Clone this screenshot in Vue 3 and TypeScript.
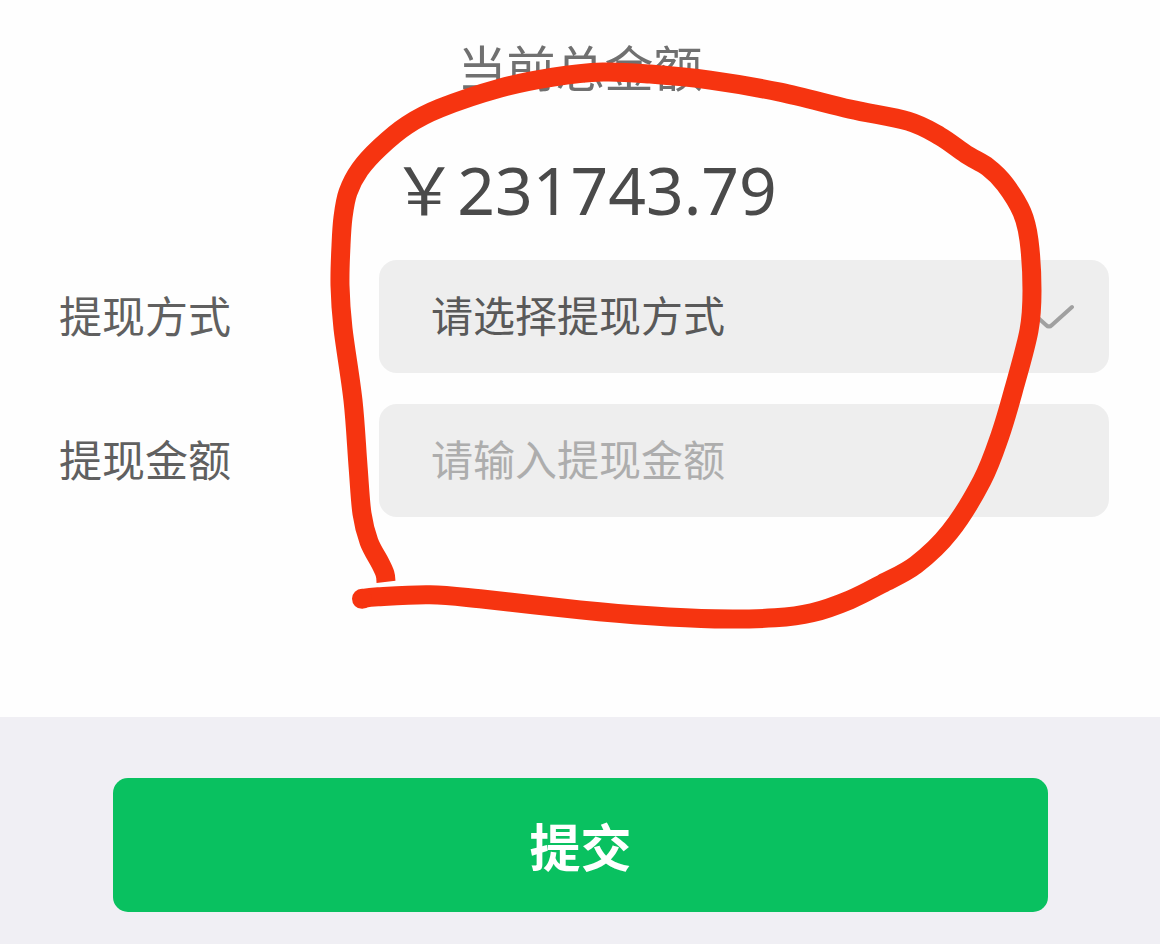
<script setup lang="ts">
import { ref } from 'vue'

type Point = [number, number]

const method = ref('')
const amount = ref('')

const strokePoints: Point[] = [
  [361, 598], [378, 596], [430, 594], [480, 598], [580, 609], [650, 615],
  [715, 618], [775, 617], [812, 612], [850, 599], [882, 583], [916, 564],
  [950, 531], [982, 480], [1000, 435], [1014, 388], [1029, 330], [1032, 290],
  [1029, 240], [1022, 212], [1005, 184], [988, 167], [966, 154], [940, 136],
  [908, 121], [850, 109], [780, 92], [710, 80], [650, 74], [603, 72],
  [553, 77], [500, 88], [440, 108], [407, 125], [380, 147], [360, 169],
  [348, 192], [343, 217], [341, 245], [340, 285], [343, 328], [353, 400],
  [358, 465], [362, 513], [369, 541], [380, 562], [385, 573], [386, 581],
]

// Catmull-Rom spline through the points, written as cubic segments
function smoothPath(points: Point[]): string {
  let d = `M${points[0][0]} ${points[0][1]}`
  for (let i = 0; i < points.length - 1; i++) {
    const a = points[Math.max(i - 1, 0)]
    const b = points[i]
    const c = points[i + 1]
    const e = points[Math.min(i + 2, points.length - 1)]
    d += `C${b[0] + (c[0] - a[0]) / 6} ${b[1] + (c[1] - a[1]) / 6} ${c[0] - (e[0] - b[0]) / 6} ${c[1] - (e[1] - b[1]) / 6} ${c[0]} ${c[1]}`
  }
  return d
}

const strokePath = smoothPath(strokePoints)
</script>

<template>
  <form class="page" @submit.prevent>
    <main class="panel">
      <h1 class="title">当前总金额</h1>
      <p class="total"><span class="currency">￥</span>231743.79</p>
      <div class="fields">
        <div class="row">
          <label class="label" for="method">提现方式</label>
          <div class="control">
            <select id="method" v-model="method" class="field">
              <option value="">请选择提现方式</option>
            </select>
            <svg class="chevron" viewBox="0 0 52 26" aria-hidden="true">
              <path d="M3 3L23 21Q26 24 29 21L49 3" />
            </svg>
          </div>
        </div>
        <div class="row">
          <label class="label" for="amount">提现金额</label>
          <div class="control">
            <input id="amount" v-model="amount" class="field" type="text" inputmode="decimal" placeholder="请输入提现金额" />
          </div>
        </div>
      </div>
      <svg class="marker" viewBox="0 0 1160 716" preserveAspectRatio="none" aria-hidden="true">
        <path :d="strokePath" />
        <circle cx="362" cy="598" r="10" />
      </svg>
    </main>
    <footer class="actions">
      <button class="submit" type="submit">提交</button>
    </footer>
  </form>
</template>

<style>
body {
  margin: 0;
  background: #f0eff4;
}
</style>

<style scoped>
.page {
  min-height: 100vh;
  background: #f0eff4;
  font-family: "Noto Sans CJK SC", sans-serif;
}

.panel {
  position: relative;
  padding: 36px 51px 200px 59px;
  background: #fefefe;
}

.title {
  margin: 0 8px 0 0;
  font-size: 49px;
  line-height: 60px;
  font-weight: 400;
  text-align: center;
  color: #707070;
}

.total {
  display: flex;
  align-items: baseline;
  justify-content: center;
  height: 100px;
  margin: 40px 0 24px;
  font-family: "Noto Sans", "Noto Sans CJK SC", sans-serif;
  font-size: 66px;
  line-height: 100px;
  color: #4a4a4a;
}

.currency {
  font-family: "Noto Sans CJK SC", sans-serif;
}

.fields {
  display: grid;
  gap: 31px;
}

.row {
  display: flex;
  align-items: center;
}

.label {
  flex: 0 0 320px;
  padding-bottom: 6px;
  font-size: 43px;
  line-height: 60px;
  color: #606060;
}

.control {
  position: relative;
  flex: 1;
  min-width: 0;
}

.field {
  display: block;
  box-sizing: border-box;
  width: 100%;
  height: 113px;
  padding: 0 52px 6px;
  border: 0;
  border-radius: 18px;
  outline: 0;
  appearance: none;
  background: #eee;
  font-family: inherit;
  font-size: 42px;
  color: #595959;
}

.field::placeholder {
  color: #adadad;
  opacity: 1;
}

.chevron {
  position: absolute;
  top: 50%;
  right: 34px;
  width: 52px;
  height: 26px;
  margin-top: -13px;
  fill: none;
  stroke: #a0a0a0;
  stroke-width: 4px;
  stroke-linecap: round;
  pointer-events: none;
}

.marker {
  position: absolute;
  inset: 0;
  width: 100%;
  height: 100%;
  pointer-events: none;
}

.marker path {
  fill: none;
  stroke: #f63410;
  stroke-width: 19px;
  stroke-linejoin: round;
}

.marker circle {
  fill: #f63410;
}

.actions {
  padding: 61px 112px 33px 113px;
}

.submit {
  display: block;
  width: 100%;
  height: 134px;
  padding: 0;
  border: 0;
  border-radius: 15px;
  background: #09c160;
  font-family: inherit;
  font-size: 51px;
  font-weight: 700;
  color: #fff;
}
</style>
